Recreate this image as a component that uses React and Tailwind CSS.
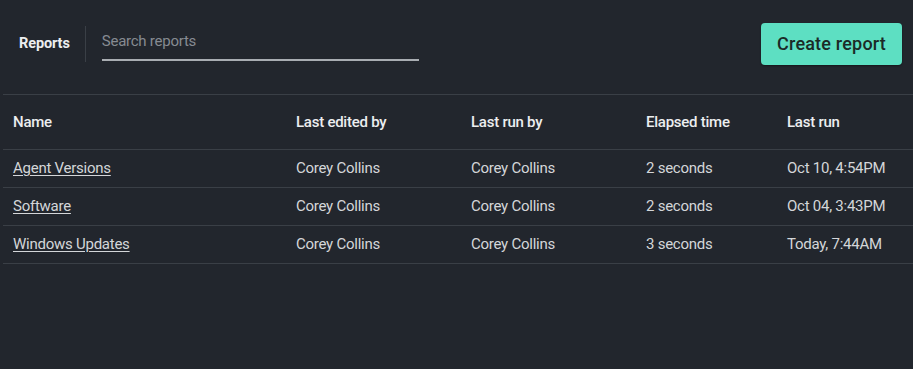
const reports = [
  { name: "Agent Versions", editedBy: "Corey Collins", runBy: "Corey Collins", elapsed: "2 seconds", lastRun: "Oct 10, 4:54PM" },
  { name: "Software", editedBy: "Corey Collins", runBy: "Corey Collins", elapsed: "2 seconds", lastRun: "Oct 04, 3:43PM" },
  { name: "Windows Updates", editedBy: "Corey Collins", runBy: "Corey Collins", elapsed: "3 seconds", lastRun: "Today, 7:44AM" },
];

const App = () => {
  return (
    <div
      className="min-h-[369px] bg-[#22262d] text-[#d4d6d9]"
      style={{ fontFamily: "Roboto, 'Liberation Sans', sans-serif" }}
    >
      {/* Toolbar */}
      <div className="flex items-center h-[88px] mb-[6px] pl-[19px] pr-[11px]">
        <h1 className="text-[14.5px] font-bold tracking-[-0.1px] text-[#eceef0]">Reports</h1>
        <div className="w-px h-[36px] bg-[#3a3f46] ml-[15px] mr-[16px]" />
        <input
          type="text"
          placeholder="Search reports"
          className="w-[317px] h-[38px] mb-[4px] bg-transparent border-b-2 border-[#a9adb2] text-[15px] tracking-[-0.25px] text-[#d4d6d9] placeholder:text-[#868b92] outline-none"
        />
        <button className="ml-auto h-[42px] mb-[1px] px-[16px] rounded-[4px] bg-[#5ddfc2] text-[#1b2a27] text-[18px] font-medium tracking-[0.2px] shadow-[0_1px_2px_rgba(0,0,0,0.4)]">
          Create report
        </button>
      </div>

      {/* Table */}
      <div className="ml-[3px]">
        <div className="grid grid-cols-[283px_175px_175px_141px_1fr] h-[56px] items-center border-t border-b border-[#3a3f46] text-[15px] tracking-[-0.25px] font-medium text-[#eceef0]">
          <div className="pl-[10px]">Name</div>
          <div className="pl-[10px]">Last edited by</div>
          <div className="pl-[10px]">Last run by</div>
          <div className="pl-[10px]">Elapsed time</div>
          <div className="pl-[10px]">Last run</div>
        </div>

        {reports.map((r) => (
          <div
            key={r.name}
            className="grid grid-cols-[283px_175px_175px_141px_1fr] h-[38px] items-center border-b border-[#3a3f46] text-[15px] tracking-[-0.25px]"
          >
            <div className="pl-[10px]">
              <a href="#" className="underline underline-offset-2">{r.name}</a>
            </div>
            <div className="pl-[10px]">{r.editedBy}</div>
            <div className="pl-[10px]">{r.runBy}</div>
            <div className="pl-[10px]">{r.elapsed}</div>
            <div className="pl-[10px]">{r.lastRun}</div>
          </div>
        ))}
      </div>
    </div>
  );
};

export default App;
